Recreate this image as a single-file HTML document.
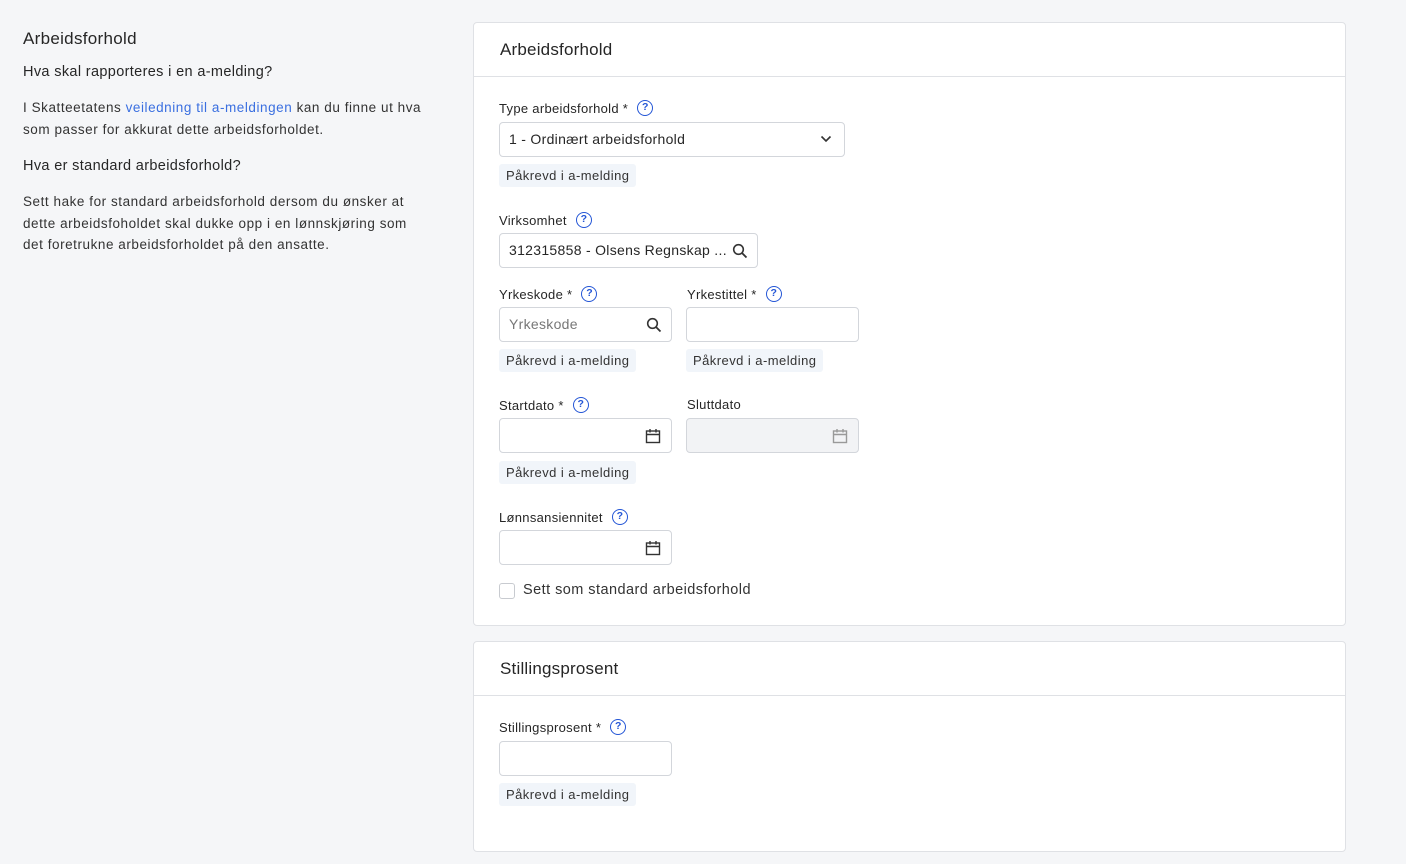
<!DOCTYPE html>
<html><head><meta charset="utf-8"><style>
*{box-sizing:border-box;margin:0;padding:0}
body{width:1406px;height:864px;background:#f5f6f8;font-family:"Liberation Sans",sans-serif;color:#262626;position:relative;overflow:hidden;letter-spacing:0.3px}
.a{position:absolute;white-space:nowrap}
.card{position:absolute;left:473px;width:873px;background:#fff;border:1px solid #dfe1e5;border-radius:4px}
.hd{position:absolute;left:0;right:0;height:54px;border-bottom:1px solid #dfe1e5}
.hd span{position:absolute;left:26px;top:17px;font-size:17px;color:#262626;letter-spacing:0.2px}
.lbl{position:absolute;font-size:13px;color:#262626;white-space:nowrap;display:flex;align-items:center}
.q{display:inline-block;width:16px;height:16px;border:1.5px solid #2456d6;border-radius:50%;color:#2456d6;font-size:10.5px;font-weight:bold;text-align:center;line-height:13px;margin-left:9px;letter-spacing:0}
.in{position:absolute;height:35px;border:1px solid #d3d6db;border-radius:4px;background:#fff;font-size:14px;color:#262626;padding-left:9px;line-height:33px;white-space:nowrap}
.dis{background:#f2f3f5}
.tag{position:absolute;height:23px;background:#f1f5fa;border-radius:3px;font-size:13px;line-height:23px;padding:0 7px;color:#333;white-space:nowrap;letter-spacing:0.45px}
.ic{position:absolute;top:9px}
</style></head><body>
<div class="a" style="left:23px;top:29px;font-size:17px">Arbeidsforhold</div>
<div class="a" style="left:23px;top:64px;font-size:14.5px;letter-spacing:0.35px">Hva skal rapporteres i en a-melding?</div>
<div class="a" style="left:23px;top:97px;font-size:13.5px;line-height:22px;color:#333;letter-spacing:0.55px">I Skatteetatens <span style="color:#3a6fe0">veiledning til a-meldingen</span> kan du finne ut hva<br>som passer for akkurat dette arbeidsforholdet.</div>
<div class="a" style="left:23px;top:158px;font-size:14.5px;letter-spacing:0.35px">Hva er standard arbeidsforhold?</div>
<div class="a" style="left:23px;top:191px;font-size:13.5px;line-height:21.5px;color:#333;letter-spacing:0.55px">Sett hake for standard arbeidsforhold dersom du ønsker at<br>dette arbeidsfoholdet skal dukke opp i en lønnskjøring som<br>det foretrukne arbeidsforholdet på den ansatte.</div>

<div class="card" style="top:22px;height:604px">
<div class="hd"><span>Arbeidsforhold</span></div>
</div>
<div class="card" style="top:641px;height:211px">
<div class="hd"><span>Stillingsprosent</span></div>
</div>

<div class="lbl" style="left:499px;top:100px">Type arbeidsforhold *<span class="q">?</span></div>
<div class="in" style="left:499px;top:122px;width:346px">1 - Ordinært arbeidsforhold
<svg class="ic" style="left:320px;top:12px" width="12" height="8" viewBox="0 0 12 8"><path d="M1.5 1.5l4.5 4.5 4.5-4.5" fill="none" stroke="#333" stroke-width="1.6"/></svg></div>
<div class="tag" style="left:499px;top:164px">Påkrevd i a-melding</div>

<div class="lbl" style="left:499px;top:212px">Virksomhet<span class="q">?</span></div>
<div class="in" style="left:499px;top:233px;width:259px">312315858 - Olsens Regnskap ...
<svg class="ic" style="left:232px" width="16" height="16" viewBox="0 0 16 16"><circle cx="6.5" cy="6.5" r="4.8" fill="none" stroke="#333" stroke-width="1.6"/><path d="M10 10l4.5 4.5" stroke="#333" stroke-width="1.8"/></svg></div>

<div class="lbl" style="left:499px;top:286px">Yrkeskode *<span class="q">?</span></div>
<div class="in" style="left:499px;top:307px;width:173px;color:#777">Yrkeskode
<svg class="ic" style="left:146px" width="16" height="16" viewBox="0 0 16 16"><circle cx="6.5" cy="6.5" r="4.8" fill="none" stroke="#333" stroke-width="1.6"/><path d="M10 10l4.5 4.5" stroke="#333" stroke-width="1.8"/></svg></div>
<div class="tag" style="left:499px;top:349px">Påkrevd i a-melding</div>
<div class="lbl" style="left:687px;top:286px">Yrkestittel *<span class="q">?</span></div>
<div class="in" style="left:686px;top:307px;width:173px"></div>
<div class="tag" style="left:686px;top:349px">Påkrevd i a-melding</div>

<div class="lbl" style="left:499px;top:397px">Startdato *<span class="q">?</span></div>
<div class="in" style="left:499px;top:418px;width:173px">
<svg class="ic" style="left:145px" width="16" height="16" viewBox="0 0 16 16"><rect x="1.5" y="3" width="13" height="11.5" fill="none" stroke="#333" stroke-width="1.4"/><path d="M1.5 6.5h13M5 1v3.5M11 1v3.5" stroke="#333" stroke-width="1.4"/></svg></div>
<div class="tag" style="left:499px;top:461px">Påkrevd i a-melding</div>
<div class="lbl" style="left:687px;top:397px">Sluttdato</div>
<div class="in dis" style="left:686px;top:418px;width:173px">
<svg class="ic" style="left:145px" width="16" height="16" viewBox="0 0 16 16"><rect x="1.5" y="3" width="13" height="11.5" fill="none" stroke="#999" stroke-width="1.4"/><path d="M1.5 6.5h13M5 1v3.5M11 1v3.5" stroke="#999" stroke-width="1.4"/></svg></div>

<div class="lbl" style="left:499px;top:509px">Lønnsansiennitet<span class="q">?</span></div>
<div class="in" style="left:499px;top:530px;width:173px">
<svg class="ic" style="left:145px" width="16" height="16" viewBox="0 0 16 16"><rect x="1.5" y="3" width="13" height="11.5" fill="none" stroke="#333" stroke-width="1.4"/><path d="M1.5 6.5h13M5 1v3.5M11 1v3.5" stroke="#333" stroke-width="1.4"/></svg></div>

<div class="a" style="left:499px;top:583px;width:16px;height:16px;border:1px solid #c8cbd0;border-radius:3px;background:#fff"></div>
<div class="a" style="left:523px;top:582px;font-size:14.5px;color:#333;letter-spacing:0.45px">Sett som standard arbeidsforhold</div>

<div class="lbl" style="left:499px;top:719px">Stillingsprosent *<span class="q">?</span></div>
<div class="in" style="left:499px;top:741px;width:173px"></div>
<div class="tag" style="left:499px;top:783px">Påkrevd i a-melding</div>
</body></html>
